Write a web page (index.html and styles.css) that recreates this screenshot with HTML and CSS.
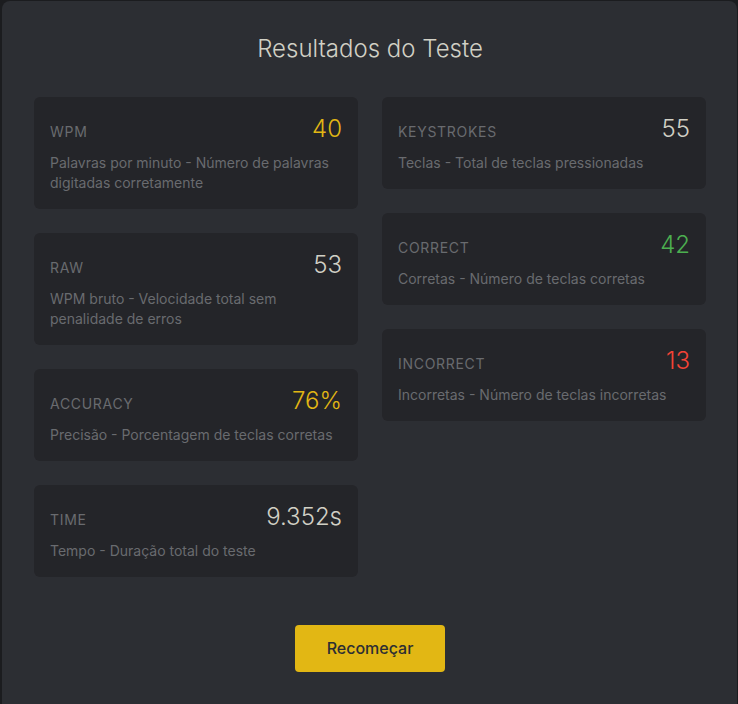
FILE: index.html
```html
<!DOCTYPE html>
<html lang="pt">
<head>
<meta charset="utf-8">
<title>Resultados do Teste</title>
<link rel="stylesheet" href="styles.css">
</head>
<body>
<div class="panel">
  <h1 class="title">Resultados do Teste</h1>
  <div class="grid">
    <div class="col">
      <div class="card">
        <div class="head"><span class="label">WPM</span><span class="value yellow">40</span></div>
        <p class="desc">Palavras por minuto - Número de palavras digitadas corretamente</p>
      </div>
      <div class="card">
        <div class="head"><span class="label">RAW</span><span class="value">53</span></div>
        <p class="desc">WPM bruto - Velocidade total sem penalidade de erros</p>
      </div>
      <div class="card">
        <div class="head"><span class="label">Accuracy</span><span class="value yellow">76%</span></div>
        <p class="desc">Precisão - Porcentagem de teclas corretas</p>
      </div>
      <div class="card">
        <div class="head"><span class="label">Time</span><span class="value">9.352s</span></div>
        <p class="desc">Tempo - Duração total do teste</p>
      </div>
    </div>
    <div class="col">
      <div class="card">
        <div class="head"><span class="label">Keystrokes</span><span class="value">55</span></div>
        <p class="desc">Teclas - Total de teclas pressionadas</p>
      </div>
      <div class="card">
        <div class="head"><span class="label">Correct</span><span class="value green">42</span></div>
        <p class="desc">Corretas - Número de teclas corretas</p>
      </div>
      <div class="card">
        <div class="head"><span class="label">Incorrect</span><span class="value red">13</span></div>
        <p class="desc">Incorretas - Número de teclas incorretas</p>
      </div>
    </div>
  </div>
  <div class="actions">
    <button class="btn" type="button">Recomeçar</button>
  </div>
</div>
</body>
</html>
```

FILE: styles.css
```css
html, body {
  margin: 0;
  padding: 0;
  background: #1b1c1f;
  overflow: hidden;
  height: 100%;
}
body {
  font-family: Inter, "Noto Sans", sans-serif;
  padding: 1px 1px 0 2px;
  box-sizing: border-box;
}
.panel {
  background: #2c2e33;
  border-radius: 8px;
  padding: 32px 31px 32px 32px;
  min-height: 760px;
  box-sizing: border-box;
}
.title {
  margin: 0 0 32px;
  text-align: center;
  font-size: 24px;
  line-height: 32px;
  font-weight: 300;
  color: #d1d0c5;
}
.grid {
  display: grid;
  grid-template-columns: 1fr 1fr;
  gap: 24px;
  align-items: start;
}
.col {
  display: flex;
  flex-direction: column;
  gap: 24px;
}
.card {
  background: #242529;
  border-radius: 6px;
  padding: 16px;
}
.head {
  display: flex;
  justify-content: space-between;
  align-items: baseline;
}
.label {
  font-size: 14px;
  text-transform: uppercase;
  letter-spacing: 0.05em;
  color: #696b6f;
}
.value {
  font-size: 24px;
  line-height: 32px;
  font-weight: 300;
  color: #d1d0c5;
}
.yellow { color: #e2b714; }
.green { color: #4caf50; }
.red { color: #f44336; }
.desc {
  margin: 8px 0 0;
  font-size: 14px;
  line-height: 20px;
  color: #696b6f;
}
.actions {
  display: flex;
  justify-content: center;
  margin-top: 48px;
}
.btn {
  font-family: inherit;
  background: #e2b714;
  color: #2c2e33;
  border: none;
  border-radius: 4px;
  padding: 12px 32px;
  font-size: 16px;
  line-height: 23px;
  font-weight: 500;
}
```
